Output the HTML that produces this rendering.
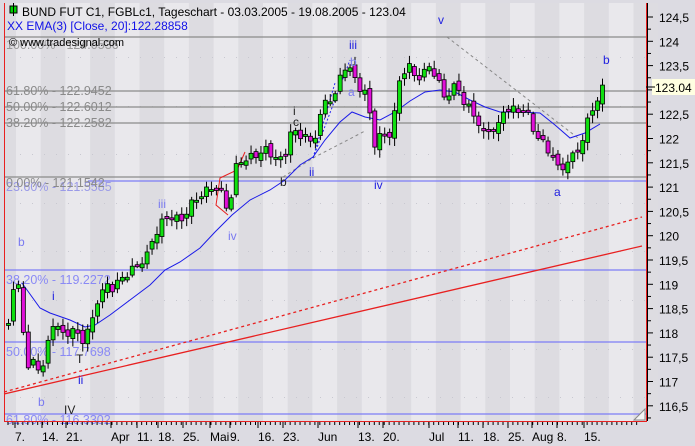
<!DOCTYPE html>
<html><head><meta charset="utf-8"><style>
html,body{margin:0;padding:0;background:#dcdbe2;}
svg{display:block;font-family:"Liberation Sans",sans-serif;}
</style></head><body>
<svg id="s" width="695" height="446" xmlns="http://www.w3.org/2000/svg">
<rect x="0" y="0" width="695" height="446" fill="#dcdbe2"/>
<rect x="4" y="3" width="642" height="418" fill="#e9e8ec"/>
<g id="bands"></g>
<g id="grid"></g>
<g stroke="#8a8a8a" stroke-width="1.2">
<line x1="4" y1="37" x2="646" y2="37"/>
<line x1="4" y1="91" x2="646" y2="91"/>
<line x1="4" y1="107" x2="646" y2="107"/>
<line x1="4" y1="123" x2="646" y2="123"/>
<line x1="4" y1="177" x2="646" y2="177"/>
</g>
<g stroke="#7d7df5" stroke-width="1.2">
<line x1="88" y1="181" x2="646" y2="181"/>
<line x1="4" y1="270" x2="646" y2="270"/>
<line x1="4" y1="342" x2="646" y2="342"/>
<line x1="4" y1="414" x2="646" y2="414"/>
</g>
<g font-size="12.5">
<text x="6" y="95" fill="#8a8a8a">61.80% - 122.9452</text>
<text x="6" y="111" fill="#8a8a8a">50.00% - 122.6012</text>
<text x="6" y="127" fill="#8a8a8a">38.20% - 122.2582</text>
<text x="6" y="49" fill="#9a9a9a">100.00% - 124.0536</text>
<text x="6" y="191" fill="#9a9ae8">23.60% - 121.5585</text>
<text x="6" y="187" fill="#8a8a8a">0.00% - 121.1542</text>
<text x="6" y="284" fill="#8a8af5">38.20% - 119.2272</text>
<text x="6" y="356" fill="#8a8af5">50.00% - 117.7698</text>
<text x="6" y="424" fill="#8a8af5">61.80% - 116.3302</text>
</g>
<line x1="4" y1="394" x2="642" y2="246" stroke="#e82020" stroke-width="1.3"/>
<line x1="4" y1="392" x2="642" y2="217" stroke="#e82020" stroke-width="1.3" stroke-dasharray="3,3"/>
<g stroke="#888" stroke-dasharray="3,3" fill="none">
<line x1="447" y1="37" x2="578" y2="138"/>
<line x1="283" y1="177" x2="313" y2="158"/>
<line x1="313" y1="158" x2="365" y2="131"/>
</g>
<g stroke="#2a2af0" stroke-dasharray="2,2" fill="none">
<line x1="313" y1="158" x2="335" y2="83"/>
<line x1="313" y1="158" x2="350" y2="60"/>
<polyline points="245,152 237,170 220,178 216,205 228,215" stroke="#e82020" stroke-dasharray="none"/>
</g>
<polyline fill="none" stroke="#1a1ae8" stroke-width="1" points="22,283 40,308 50,313 70,320 85,327 95,325 110,315 130,300 150,285 165,270 180,262 200,248 215,232 232,215 250,200 270,190 285,180 300,165 313,157 325,140 340,122 352,112 365,117 380,120 395,112 410,101 425,92 440,90 455,92 470,100 485,107 500,112 520,112 540,113 555,125 570,138 585,133 600,124"/>
<g id="candles"></g>
<g font-size="12" fill="#2020e0">
<text x="349" y="49">iii</text><text x="438" y="24">v</text>
<text x="309" y="176">ii</text><text x="374" y="189">iv</text>
<text x="554" y="196">a</text><text x="603" y="64">b</text>
<text x="52" y="300">i</text><text x="78" y="384">ii</text>
</g>
<g font-size="12" fill="#7a7af0">
<text x="18" y="246">b</text><text x="158" y="208">iii</text><text x="228" y="240">iv</text>
<text x="38" y="406">b</text><text x="348" y="96">a</text><text x="350" y="66">b</text>
</g>
<g font-size="12" fill="#222">
<text x="280" y="186">b</text><text x="293" y="126">c</text><text x="293" y="115">i</text>
<text x="64" y="414">IV</text><text x="76" y="363">T</text>
</g>
<line x1="4.5" y1="3" x2="4.5" y2="421" stroke="#e82020"/>
<line x1="646.5" y1="3" x2="646.5" y2="421" stroke="#e82020"/>
<line x1="4" y1="421.5" x2="647" y2="421.5" stroke="#e82020"/>
<polygon points="634,420 645,409 645,420" fill="#f4f4f4" stroke="#888"/>
<rect x="10" y="6" width="7" height="7" fill="#00d000" stroke="#000"/>
<line x1="13.5" y1="3" x2="13.5" y2="16" stroke="#000"/>
<text x="22" y="16" font-size="12" fill="#000">BUND FUT C1, FGBLc1, Tageschart - 03.03.2005 - 19.08.2005 - 123.04</text>
<text x="7" y="30" font-size="12" fill="#1010e8">XX EMA(3) [Close, 20]:122.28858</text>
<text x="9" y="46" font-size="11" fill="#000">© www.tradesignal.com</text>
<g id="axis" font-size="12" fill="#000"></g>
<rect x="652" y="79" width="43" height="16" fill="#ffffe1"/>
<text x="655" y="92" font-size="12" fill="#000">123.04</text>
<line x1="646" y1="87" x2="655" y2="87" stroke="#000"/>
</svg>
<script>
var NS="http://www.w3.org/2000/svg";
function el(p,t,a){var e=document.createElementNS(NS,t);for(var k in a)e.setAttribute(k,a[k]);p.appendChild(e);return e;}
var bands=document.getElementById('bands');
for(var i=0;i<26;i++){var x=16+i*24.7;if(i%2==1)el(bands,'rect',{x:x,y:3,width:24.7,height:418,fill:'#dddce1'});}
el(bands,'rect',{x:5,y:3,width:11,height:418,fill:'#dddce1'});
var g=document.getElementById('grid');
for(var y=57;y<421;y+=48.6){for(var x=20;x<646;x+=12)el(g,'rect',{x:x,y:Math.round(y),width:1,height:1,fill:'#c8c8d0'});}
var ax=document.getElementById('axis');
var labs=['124,5','124','123,5','123','122,5','122','121,5','121','120,5','120','119,5','119','118,5','118','117,5','117','116,5'];
for(var i=0;i<labs.length;i++){var y=17+i*24.3;if(labs[i]!='123')el(ax,'text',{x:659,y:y+5}).textContent=labs[i];
el(ax,'line',{x1:648,y1:y,x2:653,y2:y,stroke:'#000'});el(ax,'line',{x1:648,y1:y+12.15,x2:651,y2:y+12.15,stroke:'#000'});}
el(ax,'line',{x1:647.5,y1:3,x2:647.5,y2:421,stroke:'#000'});
var xl=[[21,'7.'],[48,'14.'],[72,'21.'],[117,'Apr'],[143,'11.'],[164,'18.'],[189,'25.'],[216,'Mai'],[236,'9.'],[264,'16.'],[289,'23.'],[324,'Jun'],[364,'13.'],[389,'20.'],[435,'Jul'],[464,'11.'],[489,'18.'],[514,'25.'],[538,'Aug'],[563,'8.'],[590,'15.']];
xl.forEach(function(a){el(ax,'text',{x:a[0]-6,y:441,'font-size':12}).textContent=a[1];el(ax,'line',{x1:a[0]-6,y1:422,x2:a[0]-6,y2:428,stroke:'#000'});});
for(var x=8;x<640;x+=4.95)el(ax,'line',{x1:x,y1:422,x2:x,y2:425,stroke:'#000'});
var A=[[8,320],[12,290],[18,288],[23,330],[28,370],[33,362],[42,370],[52,322],[57,327],[62,335],[72,330],[82,340],[88,330],[92,320],[97,300],[107,285],[112,288],[125,275],[137,265],[147,255],[153,237],[163,220],[172,215],[180,222],[190,205],[200,195],[212,187],[220,190],[228,212],[237,160],[245,160],[255,155],[265,150],[272,155],[283,162],[290,132],[298,135],[305,135],[312,148],[318,120],[326,100],[335,95],[343,65],[350,70],[357,85],[367,95],[373,145],[380,135],[388,138],[395,110],[400,75],[408,65],[415,78],[422,75],[430,65],[437,80],[445,100],[450,90],[457,85],[462,100],[470,110],[477,120],[483,135],[490,128],[497,130],[503,110],[510,110],[516,110],[522,110],[528,115],[535,135],[540,140],[546,148],[552,155],[558,170],[564,165],[570,160],[576,150],[583,140],[590,108],[596,105],[603,85]];
function iy(x){for(var i=1;i<A.length;i++)if(x<=A[i][0]){var a=A[i-1],b=A[i];return a[1]+(b[1]-a[1])*(x-a[0])/(b[0]-a[0]);}return A[A.length-1][1];}
var c=document.getElementById('candles');var prev=322;
for(var x=8;x<=604;x+=4.95){var cl=iy(x)+Math.sin(x*1.7)*4;var op=prev+Math.sin(x*0.9)*3;
var hi=Math.min(op,cl)-2-Math.abs(Math.sin(x*2.3))*6,lo=Math.max(op,cl)+2+Math.abs(Math.cos(x*1.3))*6;
el(c,'line',{x1:x+0.5,y1:hi,x2:x+0.5,y2:lo,stroke:'#000'});
var t=Math.min(op,cl),h=Math.max(Math.abs(op-cl),2);
el(c,'rect',{x:x-1.5,y:t,width:4,height:h,fill:cl<op?'#10e010':'#e010d8',stroke:'#000','stroke-width':0.8});prev=cl;}
</script>
</body></html>
